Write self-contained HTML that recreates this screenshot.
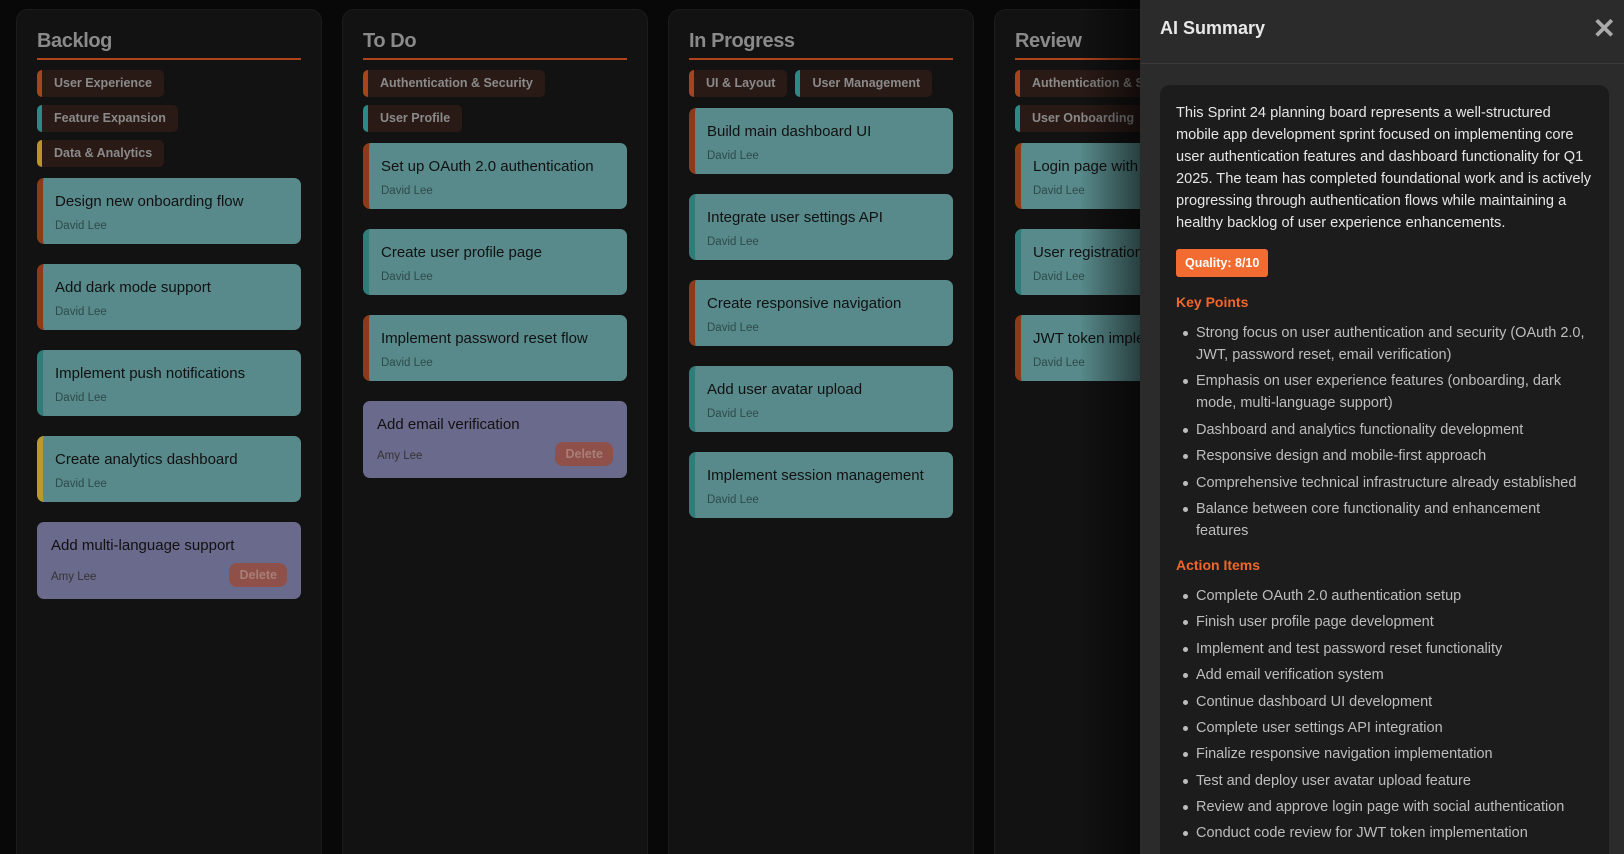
<!DOCTYPE html>
<html><head><meta charset="utf-8"><style>
*{box-sizing:border-box;margin:0;padding:0}
html,body{width:1624px;height:854px;overflow:hidden}
body{background:#080808;font-family:"Liberation Sans",sans-serif;position:relative}
.col{position:absolute;top:9px;width:306px;height:845px;background:#121212;border:1px solid #1c1c1c;border-bottom:none;border-radius:12px 12px 0 0;padding:0 20px;overflow:hidden}
.col h2{font-size:20px;color:#8a8a8a;font-weight:bold;height:50px;line-height:44px;padding-top:9px;border-bottom:2px solid #b0431b;letter-spacing:-0.4px}
.tags{margin-top:10px;display:flex;flex-wrap:wrap;gap:8px 8px}
.tag{height:27px;line-height:27px;background:#2a1a16;border-left:5px solid #a8441c;border-radius:5px;color:#8a8a8a;font-size:12.5px;font-weight:bold;padding:0 12px 0 12px;white-space:nowrap}
.t{border-left-color:#2a8a85}.y{border-left-color:#b8952a}
.card{height:66px;background:#588a8b;border-left:6px solid #8e3a18;border-radius:7px;padding:14px 0 0 12px;margin-bottom:20px;position:relative}
.card.tl{border-left-color:#2f7d78}.card.yl{border-left-color:#b89a2a}
.card .ti{font-size:15px;color:#111;line-height:19px;white-space:nowrap}
.card .nm{font-size:11.5px;color:#2e4a4a;margin-top:9px}
.card.p{background:#6a6a8c;border-left:none;height:77px;padding:14px 0 0 14px}
.card.p .nm{margin-top:16px;color:#333}
.del{position:absolute;right:14px;top:41px;background:#8e5048;color:#a87e78;font-size:12.5px;font-weight:bold;padding:5px 10px;border-radius:8px}
.cards{margin-top:11px}
.shade{position:absolute;left:1080px;top:0;width:60px;height:854px;background:linear-gradient(to right,rgba(0,0,0,0),rgba(0,0,0,.55))}
.panel{position:absolute;left:1140px;top:0;width:484px;height:854px;background:#2b2b2b;overflow:hidden}
.ph{height:64px;border-bottom:1px solid #3a3a3a;position:relative}
.ph h1{position:absolute;left:20px;top:18px;font-size:18px;color:#e8e8e8;font-weight:bold}
.x{position:absolute;right:8px;top:14px;font-size:28px;color:#aaa;font-weight:bold;line-height:30px}
.box{position:absolute;left:20px;top:85px;width:449px;height:780px;background:#1c1c1c;border-radius:10px;padding:17px 16px}
.box p{font-size:14.6px;line-height:22px;color:#e6e6e6}
.q{display:inline-block;margin-top:15px;background:#f26b30;color:#fff;font-size:12.5px;font-weight:bold;padding:0 9px;height:28px;line-height:28px;border-radius:3px}
.box h3{font-size:14px;color:#f2662a;font-weight:bold;margin-top:17px;margin-bottom:12px}
.box h3.a{margin-top:15px}
.box ul{list-style:none;padding-left:20px}
.box li{font-size:14.5px;line-height:22px;color:#bdbdbd;position:relative;margin-bottom:4.4px}
.box li:before{content:"";position:absolute;left:-13px;top:9px;width:5px;height:5px;border-radius:50%;background:#bdbdbd}
</style></head><body>

<div class="col" style="left:16px">
<h2>Backlog</h2>
<div class="tags" style="flex-direction:column;align-items:flex-start">
<div class="tag">User Experience</div><div class="tag t">Feature Expansion</div><div class="tag y">Data &amp; Analytics</div></div>
<div class="cards">
<div class="card"><div class="ti">Design new onboarding flow</div><div class="nm">David Lee</div></div>
<div class="card"><div class="ti">Add dark mode support</div><div class="nm">David Lee</div></div>
<div class="card tl"><div class="ti">Implement push notifications</div><div class="nm">David Lee</div></div>
<div class="card yl"><div class="ti">Create analytics dashboard</div><div class="nm">David Lee</div></div>
<div class="card p"><div class="ti">Add multi-language support</div><div class="nm">Amy Lee</div><div class="del">Delete</div></div>
</div></div>

<div class="col" style="left:342px">
<h2>To Do</h2>
<div class="tags" style="flex-direction:column;align-items:flex-start">
<div class="tag">Authentication &amp; Security</div><div class="tag t">User Profile</div></div>
<div class="cards">
<div class="card"><div class="ti">Set up OAuth 2.0 authentication</div><div class="nm">David Lee</div></div>
<div class="card tl"><div class="ti">Create user profile page</div><div class="nm">David Lee</div></div>
<div class="card"><div class="ti">Implement password reset flow</div><div class="nm">David Lee</div></div>
<div class="card p"><div class="ti">Add email verification</div><div class="nm">Amy Lee</div><div class="del">Delete</div></div>
</div></div>

<div class="col" style="left:668px">
<h2>In Progress</h2>
<div class="tags"><div class="tag">UI &amp; Layout</div><div class="tag t">User Management</div></div>
<div class="cards">
<div class="card"><div class="ti">Build main dashboard UI</div><div class="nm">David Lee</div></div>
<div class="card tl"><div class="ti">Integrate user settings API</div><div class="nm">David Lee</div></div>
<div class="card"><div class="ti">Create responsive navigation</div><div class="nm">David Lee</div></div>
<div class="card tl"><div class="ti">Add user avatar upload</div><div class="nm">David Lee</div></div>
<div class="card tl"><div class="ti">Implement session management</div><div class="nm">David Lee</div></div>
</div></div>

<div class="col" style="left:994px">
<h2>Review</h2>
<div class="tags" style="flex-direction:column;align-items:flex-start">
<div class="tag">Authentication &amp; Security</div><div class="tag t">User Onboarding</div></div>
<div class="cards">
<div class="card"><div class="ti">Login page with social auth</div><div class="nm">David Lee</div></div>
<div class="card tl"><div class="ti">User registration flow</div><div class="nm">David Lee</div></div>
<div class="card"><div class="ti">JWT token implementation</div><div class="nm">David Lee</div></div>
</div></div>

<div class="shade"></div>
<div class="panel">
<div class="ph"><h1>AI Summary</h1><div class="x">✕</div></div>
<div class="box">
<p>This Sprint 24 planning board represents a well-structured mobile app development sprint focused on implementing core user authentication features and dashboard functionality for Q1 2025. The team has completed foundational work and is actively progressing through authentication flows while maintaining a healthy backlog of user experience enhancements.</p>
<div class="q">Quality: 8/10</div>
<h3>Key Points</h3>
<ul>
<li>Strong focus on user authentication and security (OAuth 2.0, JWT, password reset, email verification)</li>
<li>Emphasis on user experience features (onboarding, dark mode, multi-language support)</li>
<li>Dashboard and analytics functionality development</li>
<li>Responsive design and mobile-first approach</li>
<li>Comprehensive technical infrastructure already established</li>
<li>Balance between core functionality and enhancement features</li>
</ul>
<h3 class="a">Action Items</h3>
<ul>
<li>Complete OAuth 2.0 authentication setup</li>
<li>Finish user profile page development</li>
<li>Implement and test password reset functionality</li>
<li>Add email verification system</li>
<li>Continue dashboard UI development</li>
<li>Complete user settings API integration</li>
<li>Finalize responsive navigation implementation</li>
<li>Test and deploy user avatar upload feature</li>
<li>Review and approve login page with social authentication</li>
<li>Conduct code review for JWT token implementation</li>
</ul>
</div></div>
</body></html>
